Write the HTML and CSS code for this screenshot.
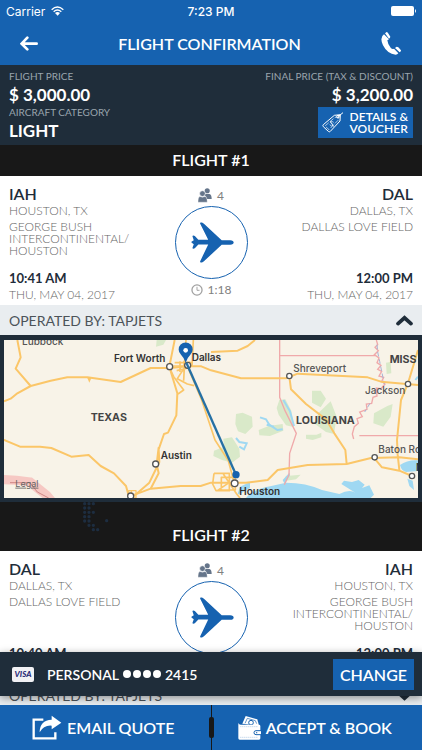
FILE: index.html
```html
<!DOCTYPE html>
<html lang="en">
<head>
  <meta charset="UTF-8">
  <meta name="viewport" content="width=device-width, initial-scale=1">
  <title>Flight Confirmation</title>
  <link rel="stylesheet" href="styles.css">
</head>
<body>
  <!-- Shared icons -->
  <svg class="sprite" aria-hidden="true">
    <symbol id="people" viewBox="0 0 44 46">
      <circle cx="29" cy="8" r="8"/>
      <path d="M22 18h14q7 2 7 16H28q-1-10-8-12z"/>
      <circle cx="14" cy="17" r="9" stroke="#fff" stroke-width="2"/>
      <path d="M6 26q8 5 16 0 7 2 7 18H0Q0 28 6 26z" stroke="#fff" stroke-width="1"/>
    </symbol>
    <symbol id="plane" viewBox="0 0 216 216">
      <path d="M165 101c14 0 14 14 0 14h-26l-54 50c-4 4-10 5-11 3-1-1-1-3 0-4l24-50H68l-10 11c-3 3-8 3-8 0l4-12-7-5v-2l7-5-4-12c0-3 5-3 8 0l10 11h30L74 52c-1-1-1-3 0-4 1-2 7-1 11 3l54 50z"/>
    </symbol>
    <symbol id="clock" viewBox="0 0 38 38">
      <circle cx="19" cy="19" r="16" fill="none" stroke="currentColor" stroke-width="4"/>
      <path d="M19 9v11h8" fill="none" stroke="currentColor" stroke-width="3"/>
    </symbol>
    <symbol id="chevron" viewBox="0 0 50 32">
      <path d="M6 25 25 8l19 17" fill="none" stroke="currentColor" stroke-width="11" stroke-linecap="round"/>
    </symbol>
  </svg>

  <div class="app">
    <header class="top">
      <div class="status">
        <div class="carrier">
          Carrier
          <svg width="13" height="10" viewBox="0 0 39 30" aria-hidden="true">
            <g fill="none" stroke="#fff" stroke-width="4">
              <path d="M2 11q17-16 35 0"/>
              <path d="M8 17q11-10 23 0"/>
            </g>
            <path d="M12 21q7-6 15 0l-7 8z" fill="#fff"/>
          </svg>
        </div>
        <div>7:23 PM</div>
        <svg class="battery" width="25" height="10" viewBox="0 0 25 10" fill="#fff" aria-hidden="true">
          <rect width="23" height="10" rx="2"/>
          <path d="M24 3q2 2 0 4z"/>
        </svg>
      </div>
      <div class="navbar">
        <button class="icon-btn" aria-label="Back">
          <svg width="18" height="15" viewBox="0 0 54 45"><path d="M50 23H6M22 5 5 23l17 17" fill="none" stroke="#fff" stroke-width="8" stroke-linecap="round"/></svg>
        </button>
        <h1>FLIGHT CONFIRMATION</h1>
        <button class="icon-btn" aria-label="Call">
          <svg width="21" height="23" viewBox="0 0 63 69" fill="#fff">
            <path d="M9 7Q-5 16 6 40q13 26 38 28 5 0 8-4L39 50q-5 3-10-3-9-11-10-22l5-3z"/>
            <path d="m12 4 5-4q2 0 4 3l7 11q0 3-4 6zM42 48l5-4q3 0 5 2l8 9q1 3-4 6z"/>
          </svg>
        </button>
      </div>
    </header>

    <section class="summary">
      <div>
        <div class="label">FLIGHT PRICE</div>
        <div class="value">$ 3,000.00</div>
        <div class="label">AIRCRAFT CATEGORY</div>
        <div class="value">LIGHT</div>
      </div>
      <div class="final">
        <div class="label">FINAL PRICE (TAX &amp; DISCOUNT)</div>
        <div class="value">$ 3,200.00</div>
        <button class="voucher">
          <svg width="22" height="21" viewBox="0 0 66 63" fill="none" stroke="#fff" stroke-width="3" aria-hidden="true">
            <path d="M37 10 55 8l-1 19-29 31q-3 3-6 0L4 44q-3-3 0-6z"/>
            <path d="m39 16 10-1-1 10-27 28L9 42z" stroke-width="2" stroke-dasharray="14 5"/>
            <circle cx="48" cy="14" r="4"/>
            <path d="m48 14 15-12"/>
            <path d="M35 31q-9-6-9 1 7 3 7 8-4 5-10-2M24 27l11 17" stroke-width="2"/>
          </svg>
          <span>DETAILS &amp;<br>VOUCHER</span>
        </button>
      </div>
    </section>

    <div class="body">
      <main class="flights">
        <h2>FLIGHT #1</h2>
        <section class="flight">
          <div class="place">
            <h3>IAH</h3>
            <p>HOUSTON, TX</p>
            <p class="airport">GEORGE BUSH INTERCONTINENTAL/ HOUSTON</p>
            <div class="time">10:41 AM</div>
            <p>THU, MAY 04, 2017</p>
          </div>
          <div class="route">
            <div class="meta"><svg class="people"><use href="#people"/></svg>4</div>
            <svg class="plane"><use href="#plane"/></svg>
            <div class="meta"><svg class="clock"><use href="#clock"/></svg>1:18</div>
          </div>
          <div class="place right">
            <h3>DAL</h3>
            <p>DALLAS, TX</p>
            <p class="airport">DALLAS LOVE FIELD</p>
            <div class="time">12:00 PM</div>
            <p>THU, MAY 04, 2017</p>
          </div>
        </section>
        <button class="operator">
          OPERATED BY: TAPJETS
          <svg class="chevron"><use href="#chevron"/></svg>
        </button>

        <div class="map">
          <svg viewBox="12 30 1242 474" preserveAspectRatio="xMidYMid slice" role="img" aria-label="Route from Houston to Dallas">
            <rect x="-600" y="0" width="2500" height="540" fill="#f8f3e8"/>
            <!-- forests -->
            <g fill="#d9e9c9">
              <path d="M470 30h28l-8 14-22 6zM708 252l20-4 28 12 2 30-22 22-22-8-8-22zM642 362l30-12-2-24 26-4 22 34 2 24-24 18-30-8-26-12z"/>
              <path d="m838 210 18-2 18 34 8 50-24-6-22-32-6-20zM776 300l30-12 42-6 2 20-40 16-32-2zM936 182h26l16 24-16 26-26-14zM956 248l36-34 18 46-8 52-24-6-36-26zM918 314h32l14-6v14l-26 8-20-4z"/>
              <path d="m1122 250 40-22 16-6-6 38-22 30-30-10zM1158 98l14-2 2 34-14 2zM858 438l44-4-14 14-38 6z"/>
            </g>
            <!-- water -->
            <g fill="#9fd8f2">
              <path d="M738 504q20-26 76-36l44-10q60 0 108 22l52 12q30-16 48-4l-42-26 8-10 24 4 20-6 18 14-8 10 22-8 14 28-10 10h20l36 12H738z"/>
              <path d="M1200 405q22-16 54-14v32l-36 3q-14-4-18-21zM720 470l30-14v18l-20 12-18 8zM1222 446l16 6 4 28-14-12zM848 450l20-22 2 8-16 26z"/>
            </g>
            <g fill="none" stroke="#9fd8f2" stroke-width="6">
              <path d="m780 262 18 6 10 16 24 16 16-2M800 284l22 6M1246 150l8-10M708 324l10 12 22 4-8 18-14-8M850 210l20 34 12 44"/>
            </g>
            <!-- state borders -->
            <g fill="none" stroke="#f0a9aa" stroke-width="4">
              <path d="M839 30v172l16 40 34 68-20 60-2 64-14 30M839 77h288M1078 317h176"/>
              <path d="m1129 30 4 14-8 8 10 10-12 12 14 10-6 14 12 8-10 12 12 6-8 14 14 4-6 12 10 8-12 14-14-2 2 24-12 4-4 18-16 2 2 16-22 8 8 14-16 6 4 14-12 10-6 22 4 15"/>
              <path d="m1131 44 2 22 6 28 6 30 8 38M1110 220l-16 26" stroke="#a7b2d5" stroke-width="3" stroke-dasharray="14 8"/>
            </g>
            <path d="M-20 450q50-4 110 6l50 40 20 24" fill="none" stroke="#f6c8c3" stroke-width="28"/>
            <path d="M30 458h60l22 28 34 18" fill="none" stroke="#cf8785" stroke-width="3"/>
            <!-- highways -->
            <g fill="none" stroke="#fbc668" stroke-width="6" stroke-linejoin="round">
              <path d="m12 214 20-8 20-16 40-22 60-16 50-10h60l100 14 90-42h58l54-5h40l29 12 90 24h135l35-14 210 11 40 13 111 10"/>
              <path d="M52 30 62 82l-15 34 45 52M-10 330h22l48 20h60l34 4 60 26 52-5 36 33 40 22 36 38 10 36"/>
              <path d="m524 30-16 80 24 80-3 66-25 52-12 4-16 46 2 38-30 62-46 40M476 352l-6 50 6 28-24 46"/>
              <path d="m388 500 64-24 90-8h60l31-10h105l65-8 30-30 90-15 117-3 73-18 85-2 60 6M1124 386l22 26 52 10 38 16"/>
              <path d="m551 152 2-40 5-82M507 110l14 30 30 40-17 12M580 30l-4 78-16-2M520 108h56M524 98h50M530 122l34-8M554 112l-22 34 30 16 20 5M565 115l40 95 40 120 40 62 16 60M540 94v32M552 92v36M568 94v30" stroke-width="5"/>
              <path d="m633 66 80-4 30-14 22-18M868 140l5 38 45 44 60 46 25 42 33 50 4 42M1254 60l-30 100-21 50-12 120 2 44 5 46"/>
              <path d="M642 430h46v52h-40l-10-20 4-32M664 442h42v38h-42zM670 432l40 60 10 12M684 460l-32 22" stroke-width="5"/>
              <path d="M386 482h22v22h-22zM394 484v20" stroke-width="4"/>
            </g>
            <path d="m262 144 12 0-6 14z" fill="#fbc668"/>
            <!-- cities -->
            <g fill="#fff" stroke="#555" stroke-width="4">
              <circle cx="509" cy="110" r="9"/><circle cx="563" cy="106" r="9"/>
              <circle cx="467" cy="402" r="9"/><circle cx="392" cy="498" r="9"/>
              <circle cx="868" cy="138" r="8"/><circle cx="1224" cy="162" r="8"/>
              <circle cx="1124" cy="382" r="8"/><circle cx="1236" cy="438" r="8"/>
              <circle cx="704" cy="460" r="10"/>
            </g>
            <g class="city">
              <text x="66" y="45" class="soft">Lubbock</text>
              <text x="342" y="96">Fort Worth</text>
              <text x="575" y="93">Dallas</text>
              <text x="482" y="388">Austin</text>
              <text x="718" y="495">Houston</text>
              <text x="880" y="125" class="soft">Shreveport</text>
              <text x="1095" y="192" class="soft">Jackson</text>
              <text x="1135" y="368" class="soft">Baton Ro</text>
              <text x="1248" y="422">N</text>
              <text x="46" y="470" class="legal">Legal</text>
            </g>
            <g class="state">
              <text x="272" y="273">TEXAS</text>
              <text x="888" y="283">LOUISIANA</text>
              <text x="1169" y="98">MISS</text>
            </g>
            <!-- route -->
            <path d="m559 98 149 336" stroke="#2670a4" stroke-width="7"/>
            <circle cx="708" cy="434" r="11" fill="#1662ae"/>
            <path d="M557 98q-4-14-14-24a21 21 0 1 1 28 0q-10 10-14 24z" fill="#1662b0"/>
            <circle cx="557" cy="61" r="7" fill="#fff"/>
          </svg>
        </div>

        <div class="spacer">
          <svg width="27" height="32" viewBox="0 0 81 96" aria-hidden="true">
            <path d="M5 5h35M5 18h25M5 31h35M5 44h25M5 57h25M18 70h25M31 83h25M71 56h1" fill="none" stroke="#1d2d40" stroke-width="10" stroke-linecap="round" stroke-dasharray="0 13"/>
          </svg>
        </div>

        <h2>FLIGHT #2</h2>
        <section class="flight">
          <div class="place">
            <h3>DAL</h3>
            <p>DALLAS, TX</p>
            <p class="airport">DALLAS LOVE FIELD</p>
            <div class="time">10:40 AM</div>
            <p>THU, MAY 04, 2017</p>
          </div>
          <div class="route">
            <div class="meta"><svg class="people"><use href="#people"/></svg>4</div>
            <svg class="plane"><use href="#plane"/></svg>
            <div class="meta"><svg class="clock"><use href="#clock"/></svg>1:20</div>
          </div>
          <div class="place right">
            <h3>IAH</h3>
            <p>HOUSTON, TX</p>
            <p class="airport">GEORGE BUSH INTERCONTINENTAL/ HOUSTON</p>
            <div class="time">12:00 PM</div>
            <p>THU, MAY 04, 2017</p>
          </div>
        </section>
        <button class="operator">
          OPERATED BY: TAPJETS
          <svg class="chevron down"><use href="#chevron"/></svg>
        </button>
      </main>

      <!-- Payment card bar, floats over the list -->
      <div class="payment">
        <span class="visa">VISA</span>
        <span class="card-name">PERSONAL</span>
        <span class="dots"><i></i><i></i><i></i><i></i></span>
        <span>2415</span>
        <button class="change">CHANGE</button>
      </div>
    </div>

    <footer class="actions">
      <button>
        <svg width="30" height="25" viewBox="0 0 90 75" aria-hidden="true">
          <path d="M34 14H5v56h65V52" fill="none" stroke="#fff" stroke-width="7"/>
          <path d="M59 2 88 23 59 43V32q-24-2-36 20 0-36 36-38z" fill="#fff"/>
        </svg>
        EMAIL QUOTE
      </button>
      <button>
        <svg width="23" height="25" viewBox="0 0 69 75" aria-hidden="true">
          <path d="m13 26 10-23 35 10 5 19z" fill="#fff"/>
          <path d="m21 25 7-15 24 7 4 9" fill="none" stroke="#1662b0" stroke-width="2"/>
          <circle cx="39" cy="23" r="7" fill="none" stroke="#1662b0" stroke-width="3"/>
          <path d="M2 24q0 5 6 5h55q4 0 4 4v37q0 4-4 4H5q-4 0-4-4V28z" fill="#fff"/>
          <path d="M7 67h54M7 35h54" stroke="#1662b0" stroke-dasharray="3 3"/>
          <path d="M69 47H54q-6 0-6 6t6 6h15" fill="#fff" stroke="#1662b0" stroke-width="3"/>
          <circle cx="56" cy="53" r="2" fill="#1662b0"/>
        </svg>
        ACCEPT &amp; BOOK
      </button>
      <span class="grip"></span>
    </footer>
  </div>
</body>
</html>
```

FILE: styles.css
```css
* {
  box-sizing: border-box;
}
body {
  margin: 0;
  background: #181818;
  font-family: Lato, "Open Sans", sans-serif;
}
h1, h2, h3, p {
  margin: 0;
}
button {
  border: none;
  padding: 0;
  background: none;
  color: inherit;
  font-family: inherit;
  cursor: pointer;
}
svg {
  display: block;
  flex: none;
}
.sprite {
  position: absolute;
  width: 0;
  height: 0;
}
.app {
  display: flex;
  flex-direction: column;
  height: 100vh;
}

/* Header */
.top {
  background: #1662b0;
  color: #fff;
}
.status {
  display: grid;
  grid-template-columns: 1fr auto 1fr;
  align-items: center;
  height: 22px;
  padding: 0 6px;
  font-family: Inter, sans-serif;
  font-size: 12px;
  font-weight: 500;
}
.carrier {
  display: flex;
  align-items: center;
  gap: 6px;
  font-weight: 400;
}
.battery {
  justify-self: end;
}
.navbar {
  display: flex;
  align-items: center;
  justify-content: space-between;
  height: 43px;
  padding: 0 20px;
}
.navbar h1 {
  font-size: 16px;
  font-weight: 600;
}
.icon-btn {
  display: flex;
}

/* Prices */
.summary {
  display: flex;
  justify-content: space-between;
  height: 80px;
  padding: 3px 9px 0;
  background: #1f2d3a;
  color: #fff;
}
.label {
  font-size: 10px;
  line-height: 17px;
  color: #9aa5ae;
}
.value {
  font-size: 17px;
  font-weight: 700;
  line-height: 19px;
}
.final {
  display: flex;
  flex-direction: column;
  align-items: flex-end;
}
.voucher {
  display: flex;
  align-items: center;
  gap: 6px;
  height: 31px;
  margin-top: 3px;
  padding: 0 5px 0 4px;
  background: #1662b0;
  font-size: 12px;
  font-weight: 600;
  line-height: 12px;
  text-align: left;
}

/* Flight list */
.body {
  position: relative;
  flex: 1;
  min-height: 0;
}
.flights {
  height: 100%;
  overflow-y: auto;
  scrollbar-width: none;
}
.flights h2 {
  height: 31px;
  color: #fff;
  font-size: 16px;
  font-weight: 600;
  line-height: 30px;
  text-align: center;
}
.flight {
  display: grid;
  grid-template-columns: 1fr 74px 1fr;
  height: 129px;
  padding: 9px 9px 0;
  background: #fff;
}
.place {
  display: flex;
  flex-direction: column;
  padding-bottom: 2px;
  color: #666;
  font-size: 12px;
  font-weight: 300;
  line-height: 16px;
}
.place h3 {
  color: #1f2d3a;
  font-size: 16px;
  font-weight: 600;
  line-height: 18px;
}
.place .airport {
  max-width: 130px;
  margin-top: 2px;
  line-height: 12px;
}
.place .time {
  margin-top: auto;
  color: #1f2d3a;
  font-size: 13px;
  font-weight: 700;
  line-height: 17px;
}
.right {
  align-items: flex-end;
  text-align: right;
}
.route {
  display: flex;
  flex-direction: column;
  align-items: center;
}
.meta {
  display: flex;
  align-items: center;
  gap: 5px;
  height: 21px;
  color: #808080;
  font-size: 12px;
  font-weight: 400;
}
.people {
  width: 14px;
  height: 15px;
  fill: #65758a;
}
.clock {
  width: 12px;
  height: 12px;
  color: #a0a0a0;
}
.plane {
  width: 73px;
  height: 73px;
  border: 1px solid #1662b0;
  border-radius: 50%;
  fill: #1662b0;
}
.operator {
  display: flex;
  align-items: center;
  justify-content: space-between;
  width: 100%;
  height: 30px;
  padding: 0 9px;
  background: #e9edf0;
  color: #4c5359;
  font-size: 14px;
  font-weight: 400;
}
.chevron {
  width: 17px;
  height: 11px;
  color: #1f2d3a;
}
.down {
  transform: rotate(180deg);
}

/* Map */
.map {
  border: solid #1f2d3a;
  border-width: 5px 4px 4px;
}
.map svg {
  width: 100%;
  height: 158px;
}
.city {
  fill: #333;
  font-family: Inter, sans-serif;
  font-size: 30px;
  font-weight: 600;
}
.city .soft {
  fill: #555;
  font-weight: 500;
}
.city .legal {
  fill: #666;
  font-size: 27px;
  font-weight: 400;
  text-decoration: underline;
}
.state {
  fill: #444;
  font-family: Inter, sans-serif;
  font-size: 32px;
  font-weight: 700;
}
.spacer {
  height: 18px;
  padding-left: 83px;
}

/* Payment card */
.payment {
  position: absolute;
  right: 0;
  bottom: 9px;
  left: 0;
  display: flex;
  align-items: center;
  height: 44px;
  padding: 0 8px 0 12px;
  background: #1f2d3a;
  box-shadow: 0 2px 8px rgba(0, 0, 0, 0.4);
  color: #fff;
  font-size: 14px;
  font-weight: 600;
}
.visa {
  width: 22px;
  height: 15px;
  border-radius: 2px;
  background: #f1f1f4;
  color: #2a2c78;
  font-size: 8px;
  font-style: italic;
  font-weight: 900;
  line-height: 15px;
  text-align: center;
}
.card-name {
  margin-left: 13px;
}
.dots {
  display: flex;
  gap: 2px;
  margin: 0 4px;
}
.dots i {
  width: 8px;
  height: 8px;
  border-radius: 50%;
  background: #fff;
}
.change {
  height: 31px;
  margin-left: auto;
  padding: 0 7px;
  background: #1662b0;
  font-size: 16px;
  font-weight: 600;
}

/* Bottom buttons */
.actions {
  position: relative;
  display: grid;
  grid-template-columns: 1fr 1fr;
  gap: 1px;
  height: 45px;
}
.actions button {
  display: flex;
  align-items: center;
  justify-content: center;
  gap: 5px;
  padding-right: 4px;
  background: #1662b0;
  color: #fff;
  font-size: 16px;
  font-weight: 600;
}
.grip {
  position: absolute;
  top: 12px;
  left: 50%;
  width: 5px;
  height: 21px;
  margin-left: -2px;
  border-radius: 2px;
  background: #181818;
}
```
